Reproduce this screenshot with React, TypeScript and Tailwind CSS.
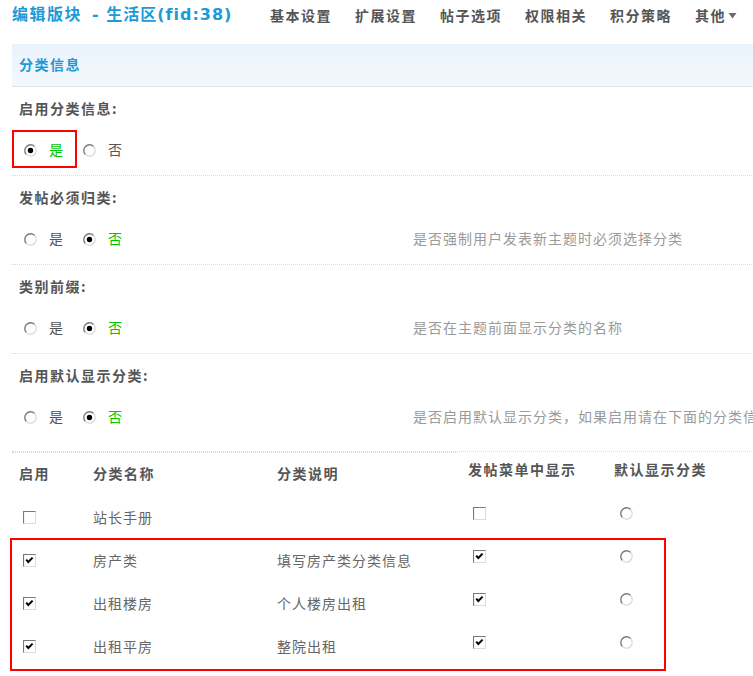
import React from "react";

// Types
type SettingRow = {
  label: string;
  value: boolean;
  desc?: string;
  tall?: boolean;
};

type Category = {
  name: string;
  desc: string;
  enabled: boolean;
  inMenu: boolean;
};

// Data
const NAV_ITEMS = ["基本设置", "扩展设置", "帖子选项", "权限相关", "积分策略"];

const SETTINGS: SettingRow[] = [
  { label: "启用分类信息:", value: true },
  { label: "发帖必须归类:", value: false, desc: "是否强制用户发表新主题时必须选择分类" },
  { label: "类别前缀:", value: false, desc: "是否在主题前面显示分类的名称" },
  {
    label: "启用默认显示分类:",
    value: false,
    desc: "是否启用默认显示分类，如果启用请在下面的分类信息中选择默认显示的分类",
    tall: true,
  },
];

const CATEGORIES: Category[] = [
  { name: "站长手册", desc: "", enabled: false, inMenu: false },
  { name: "房产类", desc: "填写房产类分类信息", enabled: true, inMenu: true },
  { name: "出租楼房", desc: "个人楼房出租", enabled: true, inMenu: true },
  { name: "出租平房", desc: "整院出租", enabled: true, inMenu: true },
];

// Classic-style form controls
const Radio = ({ checked }: { checked: boolean }) => (
  <svg width="13" height="13" viewBox="0 0 13 13" className="shrink-0">
    <circle cx="6.5" cy="6.5" r="5.8" fill="#fff" />
    <path d="M2.4 10.6 A5.8 5.8 0 0 1 10.6 2.4" stroke="#7a7a7a" strokeWidth="1.4" fill="none" />
    <path d="M10.6 2.4 A5.8 5.8 0 0 1 2.4 10.6" stroke="#d8d8d8" strokeWidth="1.2" fill="none" />
    {checked && <circle cx="6.5" cy="6.5" r="2.7" fill="#000" />}
  </svg>
);

const Checkbox = ({ checked }: { checked: boolean }) => (
  <svg width="13" height="13" viewBox="0 0 13 13" className="shrink-0">
    <rect x="0.5" y="0.5" width="12" height="12" fill="#fff" stroke="#dcdcdc" />
    <path d="M0.5 12.5 V0.5 H12.5" stroke="#7a7a7a" strokeWidth="1.2" fill="none" />
    {checked && (
      <path d="M3.2 5.6 L5.3 8 L9.6 3.6" stroke="#000" strokeWidth="2" fill="none" />
    )}
  </svg>
);

const YesNo = ({ value }: { value: boolean }) => (
  <div className="flex items-center pl-[12px]">
    <Radio checked={value} />
    <span className={`ml-[12px] pb-[2px] ${value ? "text-[#00c400]" : "text-[#555]"}`}>是</span>
    <span className="ml-[20px] flex items-center">
      <Radio checked={!value} />
    </span>
    <span className={`ml-[12px] pb-[2px] ${!value ? "text-[#00c400]" : "text-[#555]"}`}>否</span>
  </div>
);

const Header = () => (
  <div className="flex items-center h-[32px] pb-[2px] whitespace-nowrap">
    <div className="w-[258px] text-[16px] font-bold text-[#1d9ad6] font-['DejaVu_Sans','Noto_Sans_CJK_SC',sans-serif] tracking-[1px]">
      <span className="tracking-[1.5px]">编辑版块</span>
      <span className="ml-[10px]">- 生活区(fid:38)</span>
    </div>
    <nav className="flex items-center gap-[23px] text-[14px] font-bold text-[#555] tracking-[1.5px]">
      {NAV_ITEMS.map((item) => (
        <span key={item}>{item}</span>
      ))}
      <span className="flex items-center">
        其他
        <svg width="9" height="7" viewBox="0 0 9 7" className="ml-[2px]">
          <path d="M0.5 1 H8.5 L4.5 6.5 Z" fill="#6b6b6b" />
        </svg>
      </span>
    </nav>
  </div>
);

const SettingBlock = ({ row }: { row: SettingRow }) => (
  <div
    className={`box-border border-b border-dotted border-[#c9def0] ${row.tall ? "h-[98px]" : "h-[89px]"}`}
  >
    <div className="h-[44px] flex items-center pl-[7px] pb-[2px] font-bold text-[#555] tracking-[1.5px]">
      {row.label}
    </div>
    <div className="h-[38px] flex items-center">
      <div className="w-[401px] shrink-0">
        <YesNo value={row.value} />
      </div>
      {row.desc && (
        <span className="pb-[2px] text-[#9a9a9a] tracking-[1px] whitespace-nowrap">{row.desc}</span>
      )}
    </div>
  </div>
);

const CategoryTable = () => (
  <div>
    <div className="w-[446px] border-t border-dotted border-[#c9def0]" />
    <div className="grid grid-cols-[81px_184px_191px_146px_1fr] h-[44px] font-bold text-[#555] tracking-[1.5px] items-center whitespace-nowrap">
      <div className="pl-[7px] pb-[4px]">启用</div>
      <div className="pb-[4px]">分类名称</div>
      <div className="pb-[4px]">分类说明</div>
      <div className="pb-[12px]">发帖菜单中显示</div>
      <div className="pb-[12px]">默认显示分类</div>
    </div>
    {CATEGORIES.map((cat) => (
      <div
        key={cat.name}
        className="grid grid-cols-[81px_184px_191px_146px_1fr] h-[43px] items-center text-[#666] tracking-[1px] whitespace-nowrap"
      >
        <div className="pl-[11px] pb-[2px] flex items-center">
          <Checkbox checked={cat.enabled} />
        </div>
        <div className="pb-[4px]">{cat.name}</div>
        <div className="pb-[4px]">{cat.desc}</div>
        <div className="pl-[5px] pb-[11px] flex items-center">
          <Checkbox checked={cat.inMenu} />
        </div>
        <div className="pl-[6px] pb-[11px] flex items-center">
          <Radio checked={false} />
        </div>
      </div>
    ))}
  </div>
);

export default function App() {
  return (
    <div className="relative w-[753px] h-[676px] overflow-hidden bg-white pl-[12px] text-[14px] leading-none font-['Noto_Sans_CJK_SC',sans-serif]">
      <Header />

      <div className="mt-[12px] w-[900px]">
        <div className="box-border h-[43px] flex items-center pl-[7px] pb-[3px] bg-linear-to-b from-[#ebf3fb] to-[#f4f8fd] border-b border-dotted border-[#c9def0] text-[#1d9ad6] font-bold tracking-[1.5px]">
          分类信息
        </div>
        {SETTINGS.map((row) => (
          <SettingBlock key={row.label} row={row} />
        ))}
        <CategoryTable />
      </div>

      {/* Annotation boxes */}
      <div className="absolute left-[12px] top-[130px] w-[65px] h-[38px] border-2 border-[#ff0000] pointer-events-none" />
      <div className="absolute left-[10px] top-[538px] w-[656px] h-[133px] border-2 border-[#ff0000] pointer-events-none" />
    </div>
  );
}
